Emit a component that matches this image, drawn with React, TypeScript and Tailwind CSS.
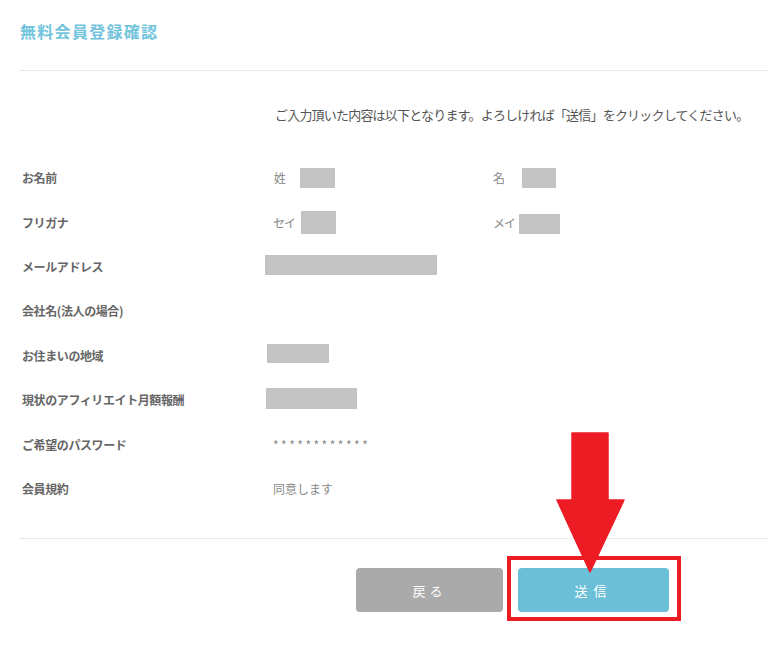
const font = { fontFamily: '"Noto Sans CJK JP", "Noto Sans", sans-serif' };

const Box = ({ w, h = 'h-[20px]' }: { w: string; h?: string }) => (
  <span className={`inline-block ${w} ${h} bg-[#c3c3c3]`} />
);

type Row = { label: string; value: React.ReactNode };

const rows: Row[] = [
  {
    label: 'お名前',
    value: (
      <div className="flex items-center">
        <div className="flex items-center w-[220px]">
          <span className="w-[27px] pl-[1px]">姓</span>
          <span className="inline-block w-[35px] h-[20px] bg-[#c3c3c3]" />
        </div>
        <div className="flex items-center">
          <span className="w-[29px]">名</span>
          <span className="inline-block w-[34px] h-[20px] bg-[#c3c3c3]" />
        </div>
      </div>
    ),
  },
  {
    label: 'フリガナ',
    value: (
      <div className="flex items-center">
        <div className="flex items-center w-[220px]">
          <span className="w-[28px] tracking-[-1px]">セイ</span>
          <span className="inline-block w-[35px] h-[23px] bg-[#c3c3c3]" />
        </div>
        <div className="flex items-center">
          <span className="w-[26px] tracking-[-1px]">メイ</span>
          <span className="inline-block w-[41px] h-[20px] mt-[3px] bg-[#c3c3c3]" />
        </div>
      </div>
    ),
  },
  { label: 'メールアドレス', value: <div className="-ml-[8px]"><Box w="w-[172px]" /></div> },
  { label: '会社名(法人の場合)', value: null },
  { label: 'お住まいの地域', value: <div className="-ml-[6px]"><Box w="w-[62px]" h="h-[19px]" /></div> },
  { label: '現状のアフィリエイト月額報酬', value: <div className="-ml-[7px]"><Box w="w-[91px]" h="h-[21px]" /></div> },
  { label: 'ご希望のパスワード', value: <span className="tracking-[2.5px] text-[12px]">************</span> },
  { label: '会員規約', value: <span>同意します</span> },
];

export default function App() {
  return (
    <div className="relative w-[768px] h-[653px] bg-white overflow-hidden" style={font}>
      <div className="pl-[20px]">
        <h1 className="pt-[22px] h-[40px] text-[16px] leading-[18px] font-bold tracking-[1.3px] text-[#71c4dc]">
          無料会員登録確認
        </h1>
        <div className="mt-[30px] border-t border-dotted border-[#d4d4d4]" />

        <p className="mt-[34px] pl-[255px] text-[13px] leading-[20px] tracking-[-0.8px] text-[#555]">
          ご入力頂いた内容は以下となります。よろしければ「送信」をクリックしてください。
        </p>

        <div className="mt-[31px]">
          {rows.map((r) => (
            <div key={r.label} className="flex items-center h-[44.43px]">
              <div className="w-[253px] pl-[2px] text-[12px] font-bold tracking-[-0.4px] text-[#666]">{r.label}</div>
              <div className="text-[12px] text-[#888]">{r.value}</div>
            </div>
          ))}
        </div>

        <div className="mt-[27px] border-t border-dotted border-[#d4d4d4]" />

        <div className="mt-[29px] flex gap-[15px] pl-[336px]">
          <button className="w-[147px] h-[44px] rounded-[4px] bg-[#aaaaaa] text-white text-[13px] tracking-[4px]">
            戻る
          </button>
          <div className="relative">
            <button className="w-[151px] h-[44px] rounded-[4px] bg-[#6bbfd6] text-white text-[13px] tracking-[6px]">
              送信
            </button>
            <div className="absolute left-[-11px] top-[-12px] w-[174px] h-[65px] border-[4px] border-[#ed1c24]" />
          </div>
        </div>
      </div>

      <svg
        className="absolute left-[556px] top-[432px]"
        width="69"
        height="142"
        viewBox="0 0 69 142"
      >
        <path
          d="M16 1 H52 V68 H68 L34 140 L1 68 H16 Z"
          fill="#ed1c24"
          stroke="#ed1c24"
          strokeWidth="1.5"
          strokeLinejoin="round"
        />
      </svg>
    </div>
  );
}
